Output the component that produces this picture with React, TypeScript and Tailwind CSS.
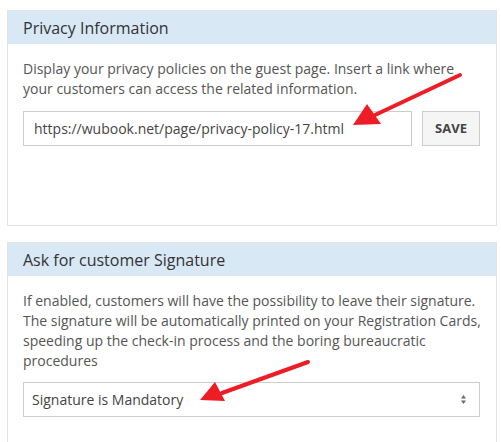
export default function App() {
  return (
    <div className="relative w-[501px] h-[442px] overflow-hidden bg-white font-['Open_Sans',sans-serif] text-[#555]">
      <div className="flex flex-col gap-4 pl-[7px] pt-[10px] w-[497px]">
        {/* Privacy card */}
        <div className="border border-[#e3e3e3] h-[216px]">
          <div className="h-[33px] flex items-center px-[15px] bg-[#d9e8f5] text-[16px] text-[#333]">
            Privacy Information
          </div>
          <div className="px-[15px] pt-[15px]">
            <p className="text-[14px] leading-[20px]">
              Display your privacy policies on the guest page. Insert a link where your customers can access the related
              information.
            </p>
            <div className="flex gap-[10px] mt-[12px]">
              <div className="w-[389px] h-[35px] border border-[#ccc] flex items-center px-[10px] text-[14px] text-[#444]">
                https://wubook.net/page/privacy-policy-17.html
              </div>
              <button className="w-[58px] h-[35px] border border-[#ccc] bg-[#f5f5f5] text-[13px] font-bold text-[#444]">
                SAVE
              </button>
            </div>
          </div>
        </div>

        {/* Signature card */}
        <div className="border border-[#e3e3e3] h-[220px]">
          <div className="h-[33px] flex items-center px-[15px] bg-[#d9e8f5] text-[16px] text-[#333]">
            Ask for customer Signature
          </div>
          <div className="px-[15px] pt-[15px]">
            <p className="text-[14px] leading-[20px]">
              If enabled, customers will have the possibility to leave their signature. The signature will be
              automatically printed on your Registration Cards, speeding up the check-in process and the boring
              bureaucratic procedures
            </p>
            <div className="mt-[11px] w-[457px] h-[35px] border border-[#ccc] flex items-center justify-between px-[8px] text-[14px] text-[#444]">
              <span>Signature is Mandatory</span>
              <svg width="7" height="11" viewBox="0 0 7 11" className="mr-[4px]">
                <path d="M3.5 1 L6 4.5 H1 Z" fill="#666" />
                <path d="M3.5 10 L6 6.5 H1 Z" fill="#666" />
              </svg>
            </div>
          </div>
        </div>
      </div>

      {/* red annotation arrows */}
      <svg className="absolute inset-0 pointer-events-none" width="501" height="442">
        <line x1="460" y1="75" x2="375" y2="115" stroke="#ee1c25" strokeWidth="4" strokeLinecap="round" />
        <polygon points="353,125 367,104 381,124" fill="#ee1c25" />
        <line x1="308" y1="362" x2="222" y2="393" stroke="#ee1c25" strokeWidth="4" strokeLinecap="round" />
        <polygon points="200,400 215,382 225,401" fill="#ee1c25" />
      </svg>
    </div>
  );
}
